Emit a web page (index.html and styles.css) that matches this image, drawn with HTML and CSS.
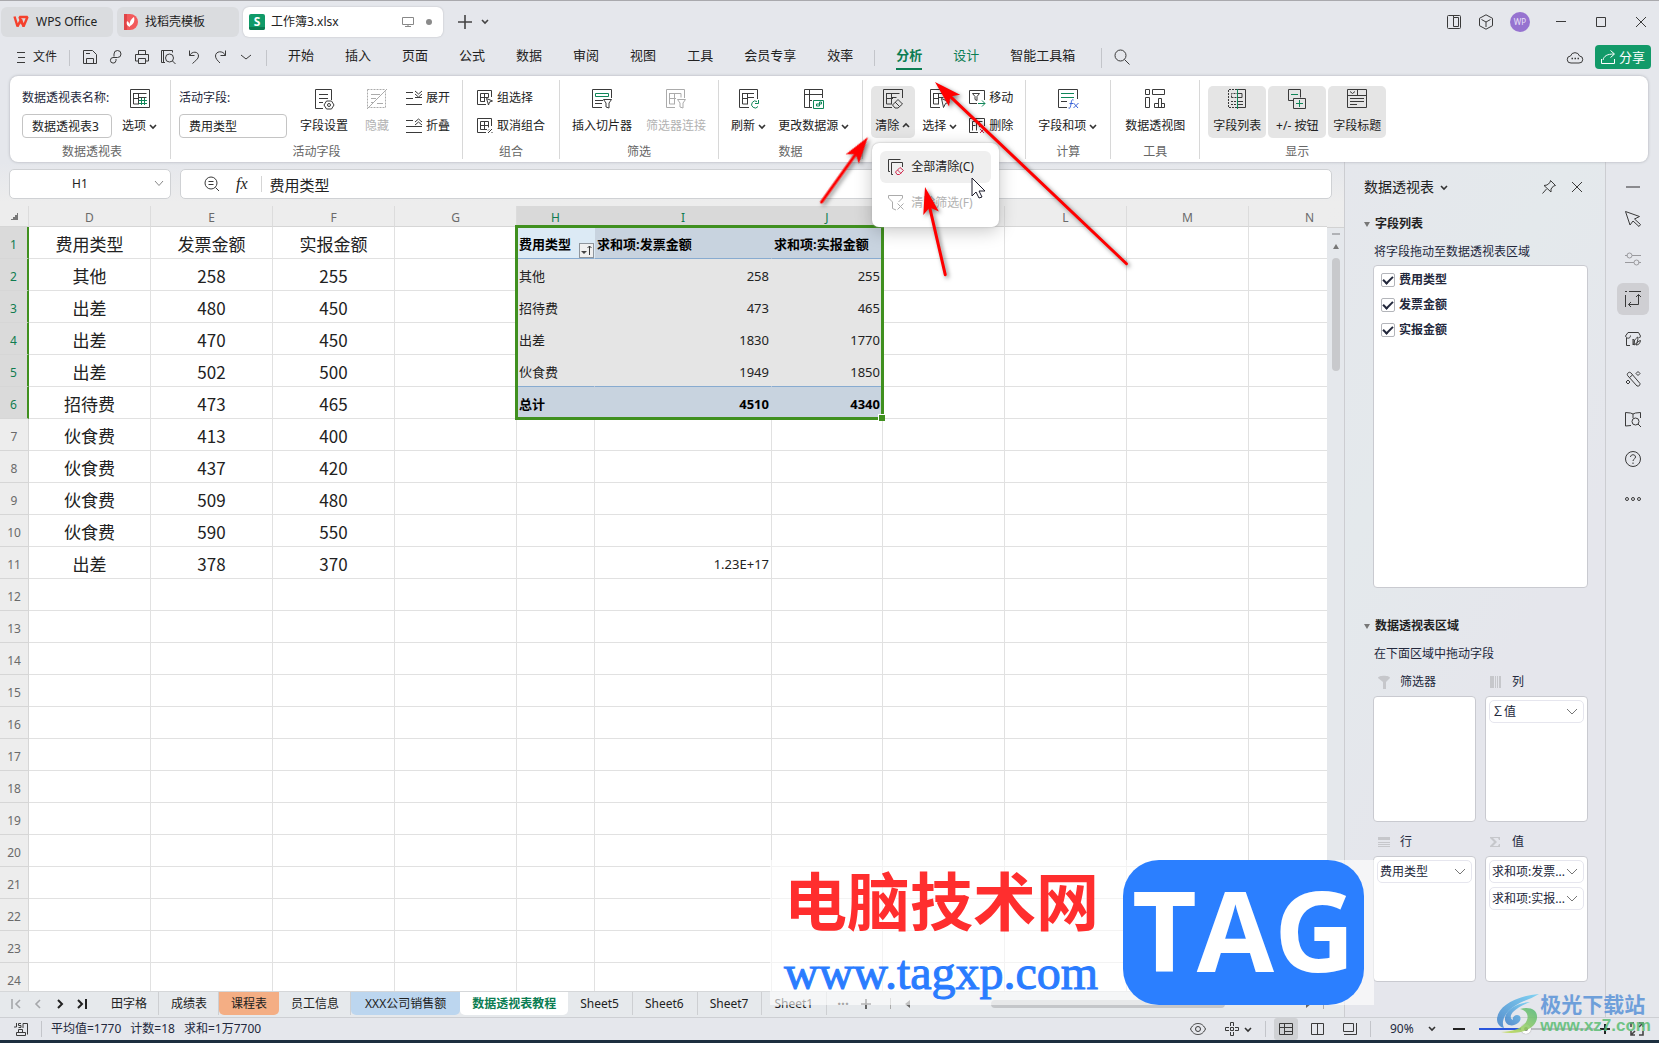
FILE: index.html
```html
<!DOCTYPE html>
<html lang="zh-CN">
<head>
    <meta charset="UTF-8">
    <meta name="viewport" content="width=device-width, initial-scale=1.0">
    <title>工作簿3.xlsx</title>
    <link rel="stylesheet" href="styles.css">
</head>
<body>

    <header class="titlebar">
        <button type="button" class="doc-tab">
            <svg class="tab-logo" viewBox="0 0 16 16"><path d="M1.500 2.500L4.500 12.500L8 5.500L10.500 12.500L14.500 3H6.500L9 10" fill="none" stroke="#f5402c" stroke-width="2.400" stroke-linejoin="bevel"/></svg>
            WPS Office
        </button>
        <button type="button" class="doc-tab tab-template">
            <svg class="tab-logo" viewBox="0 0 16 16"><path d="M1 0h6a8 8 0 0 1 0 16H1z" fill="#f25a5c"/><path d="M1 0h3v16H1z" fill="#e04548"/><path d="M7 13c-3-1-4-3-3-6 2 1 3 3 3 6zM7 12C6 8 8 5 11 3c1 4 0 7-4 9z" fill="#fff"/></svg>
            找稻壳模板
        </button>
        <button type="button" class="doc-tab tab-current">
            <svg class="tab-logo" viewBox="0 0 16 16"><rect width="16" height="16" rx="2" fill="#109a68"/><path d="M0 13h16v1a2 2 0 0 1-2 2H2a2 2 0 0 1-2-2z" fill="#0a7a50"/><text x="8" y="12" text-anchor="middle" font-size="12" font-weight="700" fill="#fff">S</text></svg>
            <span>工作簿3.xlsx</span>
            <svg class="icon muted" width="12" height="12" viewBox="0 0 12 12"><path d="M.5 1.500h11v7H.5zM3 10.500h6M6 9v1"/></svg>
            <i class="dot"></i>
        </button>
        <button type="button" class="new-tab" aria-label="新建"><svg class="icon bold" width="14" height="14" viewBox="0 0 14 14"><path d="M7 0v14M0 7h14"/></svg></button>
        <svg class="icon bold" width="8" height="8" viewBox="0 0 8 8"><path d="M1 2l3 3 3-3"/></svg>

        <div class="window-tools">
            <button type="button" aria-label="布局"><svg class="icon" width="16" height="16" viewBox="0 0 16 16"><rect x="1.500" y="1.500" width="13" height="13" rx="1"/><path d="M7.500 3.500h5v9h-5zM9.500 12.500h2M7.500 1.500v2"/></svg></button>
            <button type="button" aria-label="应用"><svg class="icon" width="16" height="16" viewBox="0 0 16 16"><path d="M8 .8l6.500 3.500v7.400L8 15.200l-6.500-3.500V4.300zM3.500 5.500L8 8l4.500-2.500M8 8v5"/></svg></button>
            <span class="avatar">WP</span>
        </div>
        <div class="window-buttons">
            <button type="button" aria-label="最小化"><svg class="icon" width="12" height="12" viewBox="0 0 12 12"><path d="M1 5.500h10"/></svg></button>
            <button type="button" aria-label="最大化"><svg class="icon" width="12" height="12" viewBox="0 0 12 12"><path d="M1.500 1.500h9v9h-9z"/></svg></button>
            <button type="button" aria-label="关闭"><svg class="icon" width="12" height="12" viewBox="0 0 12 12"><path d="M1 1l10 10M11 1L1 11"/></svg></button>
        </div>
    </header>

    <div class="menubar">
        <button type="button" class="file-btn">
            <svg class="icon" width="8" height="12" viewBox="0 0 8 12"><path d="M0 1.500h8M1 6.500h7M0 11.500h8"/></svg>
            文件
        </button>
        <i class="sep"></i>
        <div class="quick">
            <button type="button" aria-label="保存"><svg class="icon" viewBox="0 0 16 16"><path d="M1.500 1.500h9l4 4v9h-13zM4.500 14.500v-5h7v5M4 4.500h4"/></svg></button>
            <button type="button" aria-label="输出"><svg class="icon" viewBox="0 0 16 16"><path d="M6 7.500V5a3.500 3.500 0 1 1 3.500 3.500H5A2.800 2.800 0 1 0 8 11.500V10"/></svg></button>
            <button type="button" aria-label="打印"><svg class="icon" viewBox="0 0 16 16"><path d="M4.500 5V1.500h7V5M4.500 12h-3V5.500h13V12h-3M4.500 9.500h7v5h-7z"/></svg></button>
            <button type="button" aria-label="预览"><svg class="icon" viewBox="0 0 16 16"><path d="M12.500 3.500V1.500h-11v12H5M3.500 1.500v12"/><circle cx="9.500" cy="9" r="4"/><path d="M12.500 12l3 3"/></svg></button>
            <button type="button" aria-label="撤销"><svg class="icon" viewBox="0 0 16 16"><path d="M3.500 1.500v5h5M3.500 6.500C6 2 12.500 2 12.500 7c0 3-3 4.500-6 7.500"/></svg></button>
            <button type="button" aria-label="恢复"><svg class="icon" viewBox="0 0 16 16"><path d="M13.500 1.500v5h-5M13.500 6.500C11 1 3.500 2 3.500 7c0 2.500 2 4.500 4.500 7"/></svg></button>
            <button type="button" aria-label="更多"><svg class="icon" viewBox="0 0 16 16"><path d="M3 6l5 4 5-4"/></svg></button>
        </div>
        <i class="sep"></i>
        <nav class="menu-tabs">
            <a href="#">开始</a>
            <a href="#">插入</a>
            <a href="#">页面</a>
            <a href="#">公式</a>
            <a href="#">数据</a>
            <a href="#">审阅</a>
            <a href="#">视图</a>
            <a href="#">工具</a>
            <a href="#">会员专享</a>
            <a href="#">效率</a>
        </nav>
        <i class="sep"></i>
        <nav class="menu-tabs">
            <a href="#" class="active">分析</a>
            <a href="#" class="context">设计</a>
            <a href="#">智能工具箱</a>
        </nav>
        <i class="sep tall"></i>
        <button type="button" class="search-btn" aria-label="搜索"><svg class="icon" width="16" height="16" viewBox="0 0 16 16"><circle cx="6.500" cy="6.500" r="5.500"/><path d="M10.500 10.500l5 5"/></svg></button>
        <div class="share-area">
            <svg class="icon" width="16" height="14" viewBox="0 0 16 14"><path d="M4 13a3.500 3.500 0 0 1-.5-7 4.700 4.700 0 0 1 9 0 3.500 3.500 0 0 1-.5 7z"/><path d="M4.500 8.500h1.500M7.500 8.500h1.500M10.500 8.500h1.500" stroke-width="1.500"/></svg>
            <button type="button" class="share">
                <svg class="icon" width="14" height="14" viewBox="0 0 14 14"><path d="M.5 9v4.500h13V9M9.500.5l4 3.500-4 3.500M13 4C6 4 3 6 2 10"/></svg>
                分享
            </button>
        </div>
    </div>

    <section class="ribbon">
        <div class="group">
            <div class="group-items roomy">
                <div class="field">
                    <label for="pivotName">数据透视表名称:</label>
                    <input id="pivotName" type="text" class="name-input" value="数据透视表3">
                </div>
                <button type="button" class="tool">
                    <svg class="icon" viewBox="0 0 20 20"><path d="M.5.5h19v18H.5zM4 4.500h12.500M3.500 4v11H8M3.500 9.500H8M8.500 4.500v11M8.500 8.500h8"/><path class="g" d="M11.500 9v7M14.500 9v7M9 11.500h8M9 14.500h8"/></svg>
                    <span>选项<svg class="chev" viewBox="0 0 10 8"><path d="M2 3l3 3 3-3"/></svg></span>
                </button>
            </div>
            <div class="group-label">数据透视表</div>
        </div>
        <div class="group">
            <div class="group-items loose">
                <div class="field">
                    <label for="activeField">活动字段:</label>
                    <input id="activeField" type="text" class="field-input" value="费用类型">
                </div>
                <button type="button" class="tool">
                    <svg class="icon" viewBox="0 0 20 20"><path d="M9 19.500H1.500V.5h16V11M5 5.500h9M5 9.500h9M5 13.500h4M12.500 12h5l2.500 4-2.500 4h-5L10 16z"/><circle cx="15" cy="16" r="1.500"/></svg>
                    <span>字段设置</span>
                </button>
                <button type="button" class="tool" disabled>
                    <svg class="icon" viewBox="0 0 20 20"><path d="M.5.5h18M.5.5v18M.5 18.500h18v-16" stroke-dasharray="2 1"/><path d="M4 5.500h9M4 9.500h5M4 13.500h3M10 14.500h6M0 20L20 0"/></svg>
                    <span>隐藏</span>
                </button>
                <div class="stack">
                    <button type="button"><svg class="icon" viewBox="0 0 16 16"><path d="M0 2.500h7M0 8.500h7M0 14.500h16M9 7.500h7M9 1l3.500 3L16 1M9 4l3.500 3L16 4"/></svg>展开</button>
                    <button type="button"><svg class="icon" viewBox="0 0 16 16"><path d="M0 2.500h7M0 8.500h16M0 14.500h16M9 4l3.500-3L16 4M9 7l3.500-3L16 7"/></svg>折叠</button>
                </div>
            </div>
            <div class="group-label">活动字段</div>
        </div>
        <div class="group padded">
            <div class="group-items">
                <div class="stack">
                    <button type="button"><svg class="icon" viewBox="0 0 16 16"><path d="M9 14.500H.5V.5h14V7M3.500 3.500h8v4M3.500 3.500v8H8M7.500 3.500v8M3.500 7.500h8M9.500 8.500l6 2.500-3 1-1 3z"/></svg>组选择</button>
                    <button type="button"><svg class="icon" viewBox="0 0 16 16"><path d="M9 14.500H.5V.5h14V8M3.500 3.500h8v6M3.500 3.500v8H10M7.500 3.500v8M3.500 7.500h8M11 15l4-4M12 11.500l-1 1M15 14v1"/></svg>取消组合</button>
                </div>
            </div>
            <div class="group-label">组合</div>
        </div>
        <div class="group">
            <div class="group-items roomy">
                <button type="button" class="tool">
                    <svg class="icon" viewBox="0 0 20 20"><path d="M10 18.500H.5V.5h19V9M3 11.500h8M3 14.500h7M11.500 10.500h8L17 14v5l-3-1v-4z"/><path class="g" d="M3.500 4.500h13v3h-13z"/></svg>
                    <span>插入切片器</span>
                </button>
                <button type="button" class="tool" disabled>
                    <svg class="icon" viewBox="0 0 20 20"><path d="M9 18.500H.5V.5h18V9M4 4.500h11v4M3.500 4v11H8M3.500 9.500H10M8.500 4.500v11M11.500 10.500h8L17 14v5l-3-1v-4z"/></svg>
                    <span>筛选器连接</span>
                </button>
            </div>
            <div class="group-label">筛选</div>
        </div>
        <div class="group">
            <div class="group-items">
                <button type="button" class="tool">
                    <svg class="icon" viewBox="0 0 20 20"><path d="M10 18.500H.5V.5h18V10M4 4.500h11M3.500 4v11H8M3.500 9.500H8M8.500 4.500v11M8.500 8.500H15"/><path class="g" d="M18 12.500a3.500 3.500 0 1 0 1 5M19.500 11v3.500H16"/></svg>
                    <span>刷新<svg class="chev" viewBox="0 0 10 8"><path d="M2 3l3 3 3-3"/></svg></span>
                </button>
                <button type="button" class="tool">
                    <svg class="icon" viewBox="0 0 20 20"><path d="M8 18.500H.5V.5h18V9M5.500.5v18M.5 5.500h18M5.500 11.500H8"/><path class="g" d="M9.500 11.500h10v8h-10zM12.500 17v-2h3v-2h2v2h-2v2z"/></svg>
                    <span>更改数据源<svg class="chev" viewBox="0 0 10 8"><path d="M2 3l3 3 3-3"/></svg></span>
                </button>
            </div>
            <div class="group-label">数据</div>
        </div>
        <div class="group">
            <div class="group-items">
                <div class="menu-anchor">
                    <button type="button" class="tool on" aria-expanded="true">
                        <svg class="icon" viewBox="0 0 20 20"><path d="M9 18.500H.5V.5h19V9M4 4.500h12.500M3.500 4v11H8M3.500 9.500H10M8.500 4.500v11M8.500 8.500h5M15 10.500l4.500 4.500-4.500 4h-3l-2.500-3zM12 13l4.500 4.500"/></svg>
                        <span>清除<svg class="chev" viewBox="0 0 10 8"><path d="M2 5l3-3 3 3"/></svg></span>
                    </button>
                    <div class="drop-menu">
                        <button type="button" class="hover"><svg class="icon" viewBox="0 0 16 16"><path d="M2 12.500H.5V.5h12M5 15.500H3.500V3.500h11V8"/><path class="r" d="M12 8.500l3.500 3-4 4H9L7.500 13zM9.500 11l3.500 3.500"/></svg>全部清除(C)</button>
                        <button type="button" disabled><svg class="icon" viewBox="0 0 16 16"><path d="M8 15l-3.500-1.500V7L.5 3V.5h14V3l-4 4M9.500 8.500l6 6M15.500 8.500l-6 6"/></svg>清除筛选(F)</button>
                    </div>
                </div>
                <button type="button" class="tool">
                    <svg class="icon" viewBox="0 0 20 20"><path d="M10 18.500H.5V.5h18V9M4 4.500h11M3.500 4v11H8M3.500 9.500H8M8.500 4.500v11M8.500 8.500h5M11.500 9.500l8 3.500-4 1.500-2 4z"/></svg>
                    <span>选择<svg class="chev" viewBox="0 0 10 8"><path d="M2 3l3 3 3-3"/></svg></span>
                </button>
                <div class="stack">
                    <button type="button"><svg class="icon" viewBox="0 0 16 16"><path d="M8 13.500H.5V.5h15V10M3.500 3.500h7L8 6.500v4l-2-1v-3z"/><path class="g" d="M9 13.500h7M13 10.500l3 3-3 3"/></svg>移动</button>
                    <button type="button"><svg class="icon" viewBox="0 0 16 16"><path d="M9 14.500H.5V.5h15V8M3.500 3.500h10M3.500 3.500v9M3.500 7.500h3M7.500 3.500v9M10.500 3.500V9"/><path class="r" d="M11 11l4 4M15 11l-4 4"/></svg>删除</button>
                </div>
            </div>
        </div>
        <div class="group">
            <div class="group-items">
                <button type="button" class="tool">
                    <svg class="icon" viewBox="0 0 20 20"><path d="M9 18.500H.5V.5h19V10M3 12.500h6"/><path class="g" d="M3 4.500h13M3 8.500h13"/><path class="b" d="M15.500 11c-2-1-2 1-2.500 4s-1 5-2.500 4M11.500 14.500h3.500M15.500 14l4.500 5M20.500 14l-5 5"/></svg>
                    <span>字段和项<svg class="chev" viewBox="0 0 10 8"><path d="M2 3l3 3 3-3"/></svg></span>
                </button>
            </div>
            <div class="group-label">计算</div>
        </div>
        <div class="group padded">
            <div class="group-items">
                <button type="button" class="tool">
                    <svg class="icon" viewBox="0 0 20 20"><path d="M.5.5h4v5h-4zM7.500.5h12v5h-12zM.5 8.500h4v10h-4zM9.500 18.500v-4h4v-5h3v5h3v4zM13.500 14v4M16.500 14v4"/></svg>
                    <span>数据透视图</span>
                </button>
            </div>
            <div class="group-label">工具</div>
        </div>
        <div class="group last">
            <div class="group-items tight">
                <button type="button" class="tool on">
                    <svg class="icon" viewBox="0 0 20 20"><path d="M10 .5H1.500v18H10M4.500 8.500v-4H10M4.500 8.500H10M4 12.500h6M4 15.500h6" stroke-dasharray="2 1"/><path d="M11 .5h7.500v18H11M11 4.500h4v4h-4M11 12.500h5M11 15.500h5"/><path class="g" d="M10.500 0v20"/></svg>
                    <span>字段列表</span>
                </button>
                <button type="button" class="tool on">
                    <svg class="icon" viewBox="0 0 20 20"><path d="M7 11.500H1.500V.5h12v8M6.500 9.500h12v10h-12z"/><path class="g" d="M4 5.500h7M9 14.500h7M12.500 11v7"/></svg>
                    <span>+/- 按钮</span>
                </button>
                <button type="button" class="tool on">
                    <svg class="icon" viewBox="0 0 20 20"><path d="M.5.5h19v18H.5zM.5 6.500h19M10.500.5v6M3 2.500l2.500 2 2.500-2M3 9.500h14M3 12.500h14M3 15.500h7"/></svg>
                    <span>字段标题</span>
                </button>
            </div>
            <div class="group-label">显示</div>
        </div>
    </section>

    <main class="workspace">
        <div class="editor">
            <div class="formula-bar">
                <div class="name-box">
                    <input type="text" value="H1" aria-label="名称框">
                    <svg class="icon muted" width="10" height="6" viewBox="0 0 10 6"><path d="M1 0l4 4.500L9 0"/></svg>
                </div>
                <div class="formula-box">
                    <svg class="icon" width="16" height="16" viewBox="0 0 16 16"><circle cx="7" cy="7" r="6"/><path d="M11.500 11.500l3.500 3.500M4.500 5.500h5M4.500 8.500h5"/></svg>
                    <em>fx</em>
                    <input type="text" value="费用类型" aria-label="编辑栏">
                </div>
            </div>

            <div class="sheet">
                <div class="grid-wrap">
                    <table class="grid">
                        <colgroup>
                            <col class="c-head"><col class="c-std"><col class="c-std"><col class="c-std"><col class="c-std">
                            <col class="c-h"><col class="c-i"><col class="c-j">
                            <col class="c-std"><col class="c-std"><col class="c-std"><col class="c-std">
                        </colgroup>
                        <thead>
                            <tr>
                                <th class="corner"></th>
                                <th>D</th><th>E</th><th>F</th><th>G</th>
                                <th class="sel">H</th><th class="sel">I</th><th class="sel">J</th>
                                <th>K</th><th>L</th><th>M</th><th>N</th>
                            </tr>
                        </thead>
                        <tbody></tbody>
                    </table>
                    <div class="selection"></div>
                    <button type="button" class="sort-btn" aria-label="排序"><svg class="icon" width="11" height="11" viewBox="0 0 11 11"><path d="M8.500 10V1M6.500 3l2-2 2 2"/><path d="M0 6h6l-3 3z" fill="#444" stroke="none"/></svg></button>
                </div>
                <div class="v-scroll">
                    <i class="split"></i>
                    <i class="arrow-up"></i>
                    <i class="thumb"></i>
                    <i class="arrow-down"></i>
                </div>
            </div>

            <div class="sheet-tabs">
                <div class="sheet-nav">
                    <button type="button" class="dim" aria-label="首个"><svg class="icon bold" width="10" height="10" viewBox="0 0 10 10"><path d="M1 0v10M9 1L5 5l4 4"/></svg></button>
                    <button type="button" class="dim" aria-label="上一个"><svg class="icon bold" width="10" height="10" viewBox="0 0 10 10"><path d="M7 1L3 5l4 4"/></svg></button>
                    <button type="button" aria-label="下一个"><svg class="icon heavy" width="10" height="10" viewBox="0 0 10 10"><path d="M3 1l4 4-4 4"/></svg></button>
                    <button type="button" aria-label="末个"><svg class="icon heavy" width="10" height="10" viewBox="0 0 10 10"><path d="M9 0v10M1 1l4 4-4 4"/></svg></button>
                </div>
                <button type="button" class="sheet-tab">田字格</button>
                <button type="button" class="sheet-tab">成绩表</button>
                <button type="button" class="sheet-tab orange">课程表</button>
                <button type="button" class="sheet-tab">员工信息</button>
                <button type="button" class="sheet-tab blue">XXX公司销售额</button>
                <button type="button" class="sheet-tab current">数据透视表教程</button>
                <button type="button" class="sheet-tab wide">Sheet5</button>
                <button type="button" class="sheet-tab wide">Sheet6</button>
                <button type="button" class="sheet-tab wide">Sheet7</button>
                <button type="button" class="sheet-tab wide">Sheet1</button>
                <button type="button" class="more">···</button>
                <button type="button" class="add" aria-label="新建工作表"><svg class="icon bold" width="10" height="10" viewBox="0 0 10 10"><path d="M5 0v10M0 5h10"/></svg></button>
                <div class="h-scroll">
                    <i class="arrow-left"></i>
                    <i class="thumb"></i>
                    <i class="arrow-right"></i>
                </div>
            </div>
        </div>

        <aside class="pane">
            <div class="pane-head">
                <h2>数据透视表</h2>
                <svg class="chev" viewBox="0 0 10 8"><path d="M2 3l3 3 3-3"/></svg>
                <button type="button" aria-label="固定"><svg class="icon" width="14" height="14" viewBox="0 0 14 14"><path d="M8.500.5l5 5-2 .5-2.500 3v3L2 5.500l3-.5 3-2.500zM4.500 9L.5 13.500"/></svg></button>
                <button type="button" aria-label="关闭"><svg class="icon" width="12" height="12" viewBox="0 0 12 12"><path d="M1 1l10 10M11 1L1 11"/></svg></button>
            </div>
            <h3>字段列表</h3>
            <p>将字段拖动至数据透视表区域</p>
            <div class="field-list">
                <label><input type="checkbox" checked>费用类型</label>
                <label><input type="checkbox" checked>发票金额</label>
                <label><input type="checkbox" checked>实报金额</label>
            </div>
            <h3>数据透视表区域</h3>
            <p>在下面区域中拖动字段</p>
            <div class="areas">
                <div class="area">
                    <div class="area-title"><svg viewBox="0 0 12 14"><path d="M0 3c0-3 12-3 12 0L8 7v7H5V7z"/></svg>筛选器</div>
                    <div class="area-box"></div>
                </div>
                <div class="area">
                    <div class="area-title"><svg viewBox="0 0 12 14"><path d="M0 1h4v12H0zM5 1h1v12H5zM7 1h1v12H7zM9 1h2v12H9z"/></svg>列</div>
                    <div class="area-box">
                        <select aria-label="列"><option>∑值</option></select>
                    </div>
                </div>
                <div class="area">
                    <div class="area-title"><svg viewBox="0 0 12 14"><path d="M0 2h12v3H0zM0 7h12v1H0zM0 9h12v1H0zM0 11h12v1H0z"/></svg>行</div>
                    <div class="area-box">
                        <select aria-label="行"><option>费用类型</option></select>
                    </div>
                </div>
                <div class="area">
                    <div class="area-title"><svg viewBox="0 0 12 14"><path d="M0 2h10v3H9L8 3H3l4 4-4 4h5l1-2h1v3H0v-1l4-4-4-4z"/></svg>值</div>
                    <div class="area-box">
                        <select aria-label="值1"><option>求和项:发票...</option></select>
                        <select aria-label="值2"><option>求和项:实报...</option></select>
                    </div>
                </div>
            </div>
        </aside>

        <div class="rail">
            <button type="button" class="collapse" aria-label="折叠"><i></i></button>
            <button type="button" aria-label="选择"><svg class="icon" viewBox="0 0 16 16"><path d="M.5.5l14 5-5 2.500 6 5.500-1.500 2-6-5.500L5 14z"/></svg></button>
            <button type="button" class="dim" aria-label="属性"><svg class="icon" viewBox="0 0 16 16"><path d="M0 4.500h2.500M7 4.500h9M0 11.500h9M13.500 11.500H16"/><circle cx="4.500" cy="4.500" r="2.500"/><circle cx="11.500" cy="11.500" r="2.500"/></svg></button>
            <button type="button" class="on" aria-label="数据透视表"><svg class="icon" viewBox="0 0 16 16"><path d="M0 .5h2M4 .5h12M.5 4v12M13.500 3.500v10h-10M11 6l2.500-2.500L16 6M6 11l-2.500 2.500L6 16"/></svg></button>
            <button type="button" aria-label="图库"><svg class="icon" viewBox="0 0 16 16"><path d="M5 14.500H1.500V7M14.500 7l1-2-2-3.500H3L.5 5c1 3 5 3 5-.5M8 14V8c2 2 2 5 0 6zM9 14c-1-4 2-7 4-8 0 4-1 7-4 8zM11 14c1-2 2-4 4.500-4.500C15 12 14 14 11 14z"/></svg></button>
            <button type="button" aria-label="工具"><svg class="icon" viewBox="0 0 16 16"><path d="M3 2c1-1 2-1 3 0l9 10.500c0 2-1 3-3 2.500L3 5c-1-1-1-2 0-3zM4.500 6.500l3-2.500"/><path d="M13 .5l2 2-2 2-2-2zM3 9l2 2-2 2-2-2z"/></svg></button>
            <button type="button" aria-label="词典"><svg class="icon" viewBox="0 0 16 16"><path d="M6 14.500L.5 15V1.500l5 .5L8 3l2.500-1 5-.5V7M8 3v4"/><circle cx="10.500" cy="10.500" r="3.500"/><path d="M13 13l3 3"/></svg></button>
            <button type="button" aria-label="帮助"><svg class="icon" viewBox="0 0 16 16"><circle cx="8" cy="8" r="7.500"/><path d="M5.500 6c0-3 5-3 5 0 0 2-2.500 2-2.500 4M8 11.500V13"/></svg></button>
            <button type="button" aria-label="更多"><svg class="icon" viewBox="0 0 16 16"><circle cx="2" cy="8" r="1.500"/><circle cx="8" cy="8" r="1.500"/><circle cx="14" cy="8" r="1.500"/></svg></button>
        </div>
    </main>

    <footer class="statusbar">
        <svg class="icon" width="14" height="14" viewBox="0 0 14 14"><path d="M2.500 1v4H0M7 1.500H4.500v2H7v2H4.500M9 6V1.500h4.500v11M2.500 13.500h9v-3h-9zM4.500 10V7.500h4V10"/></svg>
        <i class="sep"></i>
        <span>平均值=1770</span>
        <span>计数=18</span>
        <span>求和=1万7700</span>
        <div class="status-right">
            <button type="button" aria-label="护眼"><svg class="icon" width="16" height="14" viewBox="0 0 16 14"><path d="M.5 7C3 2 6 1.500 8 1.500S13 2 15.500 7C13 12 10 12.500 8 12.500S3 12 .5 7z"/><circle cx="8" cy="7" r="2.500"/></svg></button>
            <button type="button" class="cross" aria-label="阅读"><svg class="icon" width="14" height="14" viewBox="0 0 14 14"><path d="M5.500 4V.5h3V4M5.500 10v3.500h3V10M4 5.500H.5v3H4M10 5.500h3.500v3H10M5.500 5.500h3v3h-3z"/></svg><svg class="chev" viewBox="0 0 10 8"><path d="M2 3l3 3 3-3"/></svg></button>
            <i class="sep"></i>
            <button type="button" class="view on" aria-label="普通"><svg class="icon" width="14" height="14" viewBox="0 0 14 14"><path d="M.5 1.500h13v11H.5zM.5 5.500h13M5.500 1.500v11M5.500 9.500h8"/></svg></button>
            <button type="button" class="view" aria-label="分页"><svg class="icon" width="14" height="14" viewBox="0 0 14 14"><path d="M.5 1.500h12v11H.5zM6.500 1.500v11"/></svg></button>
            <button type="button" class="view" aria-label="页面"><svg class="icon" width="14" height="14" viewBox="0 0 14 14"><path d="M.5 1.500h10v8H.5zM13.500 1v11.500H1"/></svg></button>
            <i class="sep"></i>
            <select class="zoom-level" aria-label="缩放"><option>90%</option></select>
            <button type="button" aria-label="缩小"><svg class="icon heavy" width="12" height="12" viewBox="0 0 12 12"><path d="M0 6h12"/></svg></button>
            <input type="range" class="zoom-slider" min="0" max="100" value="40" aria-label="缩放比例">
            <button type="button" aria-label="放大"><svg class="icon heavy" width="10" height="10" viewBox="0 0 10 10"><path d="M5 0v10M0 5h10"/></svg></button>
            <button type="button" class="full" aria-label="全屏"><svg class="icon bold" width="14" height="14" viewBox="0 0 14 14"><path d="M9 1h4v4M5 13H1V9M13 1L9 5M1 13l4-4M1 5V1h3M13 9v4H9"/></svg></button>
        </div>
    </footer>
    <div class="taskbar-edge"></div>

    <!-- annotations on top of the window -->
    <svg class="arrows" width="1200" height="300" viewBox="0 0 1200 300">
        <g id="marks">
            <g transform="translate(935 81) rotate(43.500)"><path d="M0 0l27-8-6 8 6 8z"/><path d="M18 0h246"/></g>
            <g transform="translate(868 136) rotate(125.500)"><path d="M0 0l27-8-6 8 6 8z"/><path d="M18 0h62"/></g>
            <g transform="translate(925 186) rotate(77)"><path d="M0 0l27-8-6 8 6 8z"/><path d="M18 0h72"/></g>
        </g>
        <path class="pointer" d="M972 177v18l4-4 3 6 3-1-3-6h6z"/>
    </svg>

    <div class="tag-mark">
        <div class="tag-text">
            <strong>电脑技术网</strong>
            <span>www.tagxp.com</span>
        </div>
        <div class="tag-logo">TAG</div>
    </div>

    <div class="xz-mark">
        <svg width="44" height="42" viewBox="0 0 44 42">
            <defs>
                <linearGradient id="swirlBlue" x1="0" y1="1" x2="1" y2="0"><stop offset="0" stop-color="#3f7fc8"/><stop offset="1" stop-color="#6fd0f5"/></linearGradient>
                <linearGradient id="swirlGreen" x1="0" y1="1" x2="1" y2="0"><stop offset="0" stop-color="#c8dc50"/><stop offset="1" stop-color="#4fb878"/></linearGradient>
            </defs>
            <path d="M43 0C20 2 2 12 1 25c0 5 3 8 7 9-4-8 3-20 20-27 5-2 10-4 15-7z" fill="url(#swirlBlue)"/>
            <path d="M34 8C18 9 8 18 9 26c1 6 8 7 13 3 4-3 3-8-1-8-3 0-5 3-4 5-3-1-3-5 0-8 4-4 10-7 17-10z" fill="url(#swirlBlue)"/>
            <path d="M24 15c10-3 18 1 17 9-1 10-16 18-36 14 12 0 23-4 26-12 2-5-1-10-7-11z" fill="url(#swirlGreen)"/>
        </svg>
        <div class="xz-text">
            <strong>极光下载站</strong>
            <span>www.xz7.com</span>
        </div>
    </div>

    <script src="script.js"></script>
</body>
</html>
```

FILE: script.js
```js
const source = [
    ["费用类型", "发票金额", "实报金额"],
    ["其他", 258, 255],
    ["出差", 480, 450],
    ["出差", 470, 450],
    ["出差", 502, 500],
    ["招待费", 473, 465],
    ["伙食费", 413, 400],
    ["伙食费", 437, 420],
    ["伙食费", 509, 480],
    ["伙食费", 590, 550],
    ["出差", 378, 370],
]

const pivot = [
    ["费用类型", "求和项:发票金额", "求和项:实报金额"],
    ["其他", 258, 255],
    ["招待费", 473, 465],
    ["出差", 1830, 1770],
    ["伙食费", 1949, 1850],
    ["总计", 4510, 4340],
]

const tbody = document.querySelector(".grid tbody")

function addCell(tr, text, className) {
    const td = document.createElement("td")
    td.textContent = text
    if (className) td.className = className
    tr.appendChild(td)
}

for (let i = 0; i < 24; i++) {
    const tr = document.createElement("tr")
    const th = document.createElement("th")
    th.textContent = i + 1
    if (i < pivot.length) th.className = "sel"
    tr.appendChild(th)

    for (let c = 0; c < 3; c++) {
        addCell(tr, source[i] ? source[i][c] : "", "src")
    }
    addCell(tr, "")

    for (let c = 0; c < 3; c++) {
        if (pivot[i]) {
            let name = "pv"
            if (i === 0) name += " pv-head"
            if (i === pivot.length - 1) name += " pv-total"
            if (i === pivot.length - 2) name += " pv-last"
            if (c > 0 && i > 0) name += " num"
            addCell(tr, pivot[i][c], name)
        } else {
            addCell(tr, i === 10 && c === 1 ? "1.23E+17" : "", "num")
        }
    }
    for (let c = 0; c < 4; c++) addCell(tr, "")
    tbody.appendChild(tr)
}
```

FILE: styles.css
```css
* {
    box-sizing: border-box;
}
body {
    margin: 0;
    height: 100vh;
    display: flex;
    flex-direction: column;
    overflow: hidden;
    position: relative;
    background: #e5e7ec;
    border-top: 1px solid #a9a9ad;
    color: #222;
    font: 12px/16px "Noto Sans", "Noto Sans CJK SC", sans-serif;
}
button,
input,
select {
    font: inherit;
    color: inherit;
    border: 0;
    padding: 0;
    margin: 0;
    background: none;
    outline: 0;
}
button {
    display: flex;
    align-items: center;
    justify-content: center;
    white-space: nowrap;
}
a {
    color: inherit;
    text-decoration: none;
}
.icon {
    fill: none;
    stroke: #3a3a3a;
    stroke-width: 1;
    flex: none;
    overflow: visible;
}
.icon .g {
    stroke: #0f8658;
}
.icon .r {
    stroke: #d02c50;
}
.icon .b {
    stroke: #3a63d8;
}
.icon.muted {
    stroke: #888;
}
.icon.bold {
    stroke: #444;
    stroke-width: 1.6;
}
.icon.heavy {
    stroke: #222;
    stroke-width: 2;
}
.chev {
    width: 10px;
    height: 8px;
    margin-left: 2px;
    fill: none;
    stroke: #333;
    stroke-width: 1.6;
    flex: none;
}
.sep {
    width: 1px;
    height: 16px;
    background: #c3c5ca;
    flex: none;
}
.sep.tall {
    height: 20px;
}

/* title bar */
.titlebar {
    height: 38px;
    padding: 6px 0 2px 1px;
    display: flex;
    align-items: center;
    gap: 4px;
    flex: none;
}
.doc-tab {
    width: 112px;
    height: 30px;
    padding-left: 12px;
    gap: 7px;
    justify-content: flex-start;
    border-radius: 6px;
    background: #dadcdf;
}
.tab-logo {
    width: 16px;
    height: 16px;
    flex: none;
}
.tab-template {
    width: 122px;
    padding-left: 6px;
    gap: 6px;
}
.tab-current {
    width: 200px;
    padding: 0 11px 0 6px;
    gap: 6px;
    background: #fff;
    box-shadow: 0 0 2px #b5b7bc;
}
.tab-current span {
    flex: 1;
    text-align: left;
}
.dot {
    width: 6px;
    height: 6px;
    margin-left: 6px;
    border-radius: 50%;
    background: #8a8a8a;
}
.new-tab {
    width: 24px;
    height: 30px;
    margin-left: 6px;
}
.window-tools {
    margin-left: auto;
    display: flex;
    align-items: center;
    gap: 16px;
}
.avatar {
    width: 20px;
    height: 20px;
    border-radius: 50%;
    background: #9673d0;
    color: #e9e0f7;
    font-size: 8px;
    line-height: 20px;
    text-align: center;
}
.window-buttons {
    display: flex;
    padding: 0 12px 0 21px;
    gap: 28px;
}

/* menu row */
.menubar {
    height: 37px;
    padding: 0 8px 0 17px;
    display: flex;
    align-items: center;
    flex: none;
}
.file-btn {
    height: 20px;
    gap: 8px;
    margin: 0 12px 2px 0;
}
.quick {
    display: flex;
    margin: 0 7px 2px;
}
.quick button {
    width: 26px;
    height: 24px;
}
.quick .icon {
    width: 16px;
    height: 16px;
}
.menu-tabs {
    display: flex;
    gap: 31px;
    margin: 0 21px;
    font-size: 13px;
    line-height: 20px;
}
.menu-tabs a {
    padding-bottom: 3px;
    border-bottom: 2px solid transparent;
    white-space: nowrap;
}
.menu-tabs .active {
    color: #0b7d52;
    font-weight: 700;
    border-bottom-color: #0b7d52;
}
.menu-tabs .context {
    color: #0b7d52;
}
.search-btn {
    margin: 0 0 2px 12px;
}
.menu-tabs:nth-of-type(2) {
    margin-right: 26px;
}
.share-area {
    margin: 0 0 2px auto;
    display: flex;
    align-items: center;
    gap: 12px;
}
.share {
    width: 56px;
    height: 24px;
    gap: 4px;
    border-radius: 4px;
    background: #129a69;
    color: #fff;
    font-size: 13px;
}
.share .icon {
    stroke: #fff;
}

/* ribbon */
.ribbon {
    margin: 0 11px 0 10px;
    height: 86px;
    padding: 4px 0 3px 4px;
    display: flex;
    flex: none;
    position: relative;
    z-index: 2;
    background: #fff;
    border-radius: 8px;
    box-shadow: 0 0 3px #a9abb2;
}
.group {
    padding: 6px 8px 0;
    border-right: 1px solid #d8d8d8;
}
.group.padded {
    padding: 6px 10px 0;
}
.group.last {
    border-right: 0;
}
.group-items {
    height: 52px;
    display: flex;
    gap: 3px;
}
.group-items.roomy {
    gap: 6px;
}
.group-items.loose {
    gap: 9px;
}
.group-items.tight {
    gap: 2px;
}
.group-items.tight .tool {
    padding: 3px 5px 0;
    min-width: 58px;
}
.group-label {
    margin-top: 6px;
    line-height: 16px;
    text-align: center;
    color: #666;
}
.field {
    display: flex;
    flex-direction: column;
    align-items: flex-start;
    justify-content: space-between;
    padding-top: 4px;
}
.field label {
    color: #23283c;
    line-height: 16px;
    white-space: nowrap;
}
.name-input,
.field-input {
    width: 90px;
    height: 24px;
    padding: 0 9px;
    border: 1px solid #c4c4c4;
    border-radius: 4px;
}
.field-input {
    width: 108px;
}
.tool {
    height: 52px;
    padding: 3px 4px 0;
    flex-direction: column;
    justify-content: flex-start;
    gap: 9px;
    border-radius: 5px;
}
.tool .icon {
    width: 20px;
    height: 20px;
}
.tool span {
    display: flex;
    align-items: center;
}
.tool.on {
    background: #e5e5e5;
}
.tool:disabled,
.drop-menu button:disabled {
    color: #b2b2b2;
}
.tool:disabled .icon,
.drop-menu button:disabled .icon {
    stroke: #ababab;
}
.stack {
    display: flex;
    flex-direction: column;
    padding: 2px 4px 0;
    gap: 8px;
}
.stack button {
    height: 20px;
    gap: 4px;
    justify-content: flex-start;
}
.stack .icon {
    width: 16px;
    height: 16px;
}
.menu-anchor {
    position: relative;
}
.drop-menu {
    position: absolute;
    left: 1px;
    top: 57px;
    width: 127px;
    padding: 8px 8px 8px;
    background: #fff;
    border-radius: 7px;
    box-shadow: 0 0 2px #aaa, 0 4px 18px rgba(0, 0, 0, .22);
}
.drop-menu button {
    width: 100%;
    height: 32px;
    padding-left: 8px;
    gap: 7px;
    justify-content: flex-start;
    border-radius: 6px;
}
.drop-menu button + button {
    margin-top: 4px;
}
.drop-menu .icon {
    width: 16px;
    height: 16px;
}
.drop-menu .hover {
    background: #efefef;
}

/* workspace */
.workspace {
    flex: 1;
    min-height: 0;
    display: grid;
    grid-template-columns: minmax(0, 1fr) 261px 54px;
}
.editor {
    min-height: 0;
    display: flex;
    flex-direction: column;
    background: linear-gradient(#e5e7ec, #ededed 40px, #e5e9ec);
}
.formula-bar {
    height: 44px;
    padding: 7px 12px 7px 9px;
    display: flex;
    gap: 9px;
    flex: none;
}
.name-box,
.formula-box {
    display: flex;
    align-items: center;
    background: #fff;
    border: 1px solid #cfd1d4;
    border-radius: 5px;
}
.name-box {
    width: 162px;
    padding: 0 6px 0 0;
}
.name-box input {
    width: 100%;
    padding-right: 4px;
    text-align: center;
}
.formula-box {
    flex: 1;
    padding-left: 23px;
}
.formula-box em {
    margin-left: 16px;
    padding-right: 13px;
    border-right: 1px solid #d5d5d5;
    font: italic 16px/16px "Liberation Serif", serif;
}
.formula-box input {
    flex: 1;
    padding-left: 8px;
    font-size: 15px;
    height: 28px;
}
.sheet {
    flex: 1;
    min-height: 0;
    display: flex;
}
.grid-wrap {
    flex: 1;
    min-width: 0;
    position: relative;
    overflow: hidden;
    background: #fff;
}
.grid {
    width: 1371px;
    table-layout: fixed;
    border-collapse: separate;
    border-spacing: 0;
}
.c-head { width: 29px; }
.c-std { width: 122px; }
.c-h { width: 78px; }
.c-i { width: 177px; }
.c-j { width: 111px; }
.grid th,
.grid td {
    height: 32px;
    padding: 2px 2px 0;
    border-right: 1px solid #e1e1e1;
    border-bottom: 1px solid #e1e1e1;
    white-space: nowrap;
    overflow: hidden;
    line-height: 24px;
    text-align: left;
    font-size: 13px;
}
.grid th {
    background: #ededed;
    color: #6a6a6a;
    font-weight: 400;
    font-size: 12px;
    text-align: center;
    border-color: #d6d6d6;
}
.grid thead th {
    height: 21px;
    padding-top: 4px;
    line-height: 16px;
    border-right-color: #dcdcdc;
}
.grid thead th.sel {
    background: #d9d9d9;
    border-right-color: #d9d9d9;
    color: #107c50;
}
.grid tbody th {
    padding-top: 4px;
}
.grid tbody th.sel {
    background: #dadada;
    color: #107c50;
    border-right: 2px solid #40901f;
}
.grid .corner {
    background: linear-gradient(135deg, transparent 50%, #777 50%) 11px 7px / 7px 7px no-repeat #ededed;
}
.grid td.src {
    font-size: 17px;
    text-align: center;
    font-family: "Noto Sans CJK SC", sans-serif;
}
.grid td.num {
    text-align: right;
}
.grid td.pv {
    background: #e5e5e5;
    border-color: #e5e5e5;
    color: #222;
}
.grid td.pv-head,
.grid td.pv-total {
    background: #c8d3df;
    border-color: #c8d3df;
    font-weight: 700;
    color: #000;
}
.grid td.pv-head,
.grid td.pv-last {
    border-bottom-color: #88abd0;
}
.grid td.pv-head:nth-child(6) {
    background: #dceaf5;
    border-right-color: #dceaf5;
}
.selection {
    position: absolute;
    left: 515px;
    top: 19px;
    width: 369px;
    height: 195px;
    border: 3px solid #40901f;
}
.selection::after {
    content: "";
    position: absolute;
    right: -4px;
    bottom: -4px;
    width: 6px;
    height: 6px;
    background: #40901f;
    border: 1px solid #fff;
    border-width: 1px 0 0 1px;
}
.sort-btn {
    position: absolute;
    left: 579px;
    top: 37px;
    width: 15px;
    height: 15px;
    background: #f0f0f0;
    border: 1px solid #8f959c;
}
.v-scroll {
    width: 17px;
    margin-top: 21px;
    padding: 5px 0 8px;
    display: flex;
    flex-direction: column;
    align-items: center;
    background: #e5e8ec;
    border-top: 1px solid #d2d2d2;
}
.split {
    width: 8px;
    height: 2px;
    background: #b0b2b6;
}
.arrow-up,
.arrow-down {
    margin-top: 9px;
    border: 3px solid transparent;
    border-top: 0;
    border-bottom: 5px solid #777;
}
.arrow-down {
    margin-top: auto;
    border-bottom: 0;
    border-top: 5px solid #777;
}
.v-scroll .thumb {
    width: 8px;
    height: 113px;
    margin-top: 9px;
    border-radius: 4px;
    background: #c8c9cc;
}

/* sheet tabs */
.sheet-tabs {
    height: 26px;
    padding: 0 20px 2px 5px;
    display: flex;
    flex: none;
    border-top: 1px solid #d5d7d9;
    background: #e6e9ec;
}
.sheet-nav {
    width: 94px;
    display: flex;
}
.sheet-nav button {
    width: 22px;
}
.sheet-nav .dim .icon {
    stroke: #a5a7aa;
}
.sheet-tab {
    height: 23px;
    padding: 0 11px 0 12px;
    border-right: 1px solid #cdcfd2;
    flex: none;
}
.sheet-tab.wide {
    padding: 0 13px 0 12px;
}
.sheet-tab.orange,
.sheet-tab.blue,
.sheet-tab.current {
    padding: 0 12px;
    border-right: 0;
    border-radius: 0 0 5px 5px;
    background: #f4ae84;
}
.sheet-tab.blue {
    padding: 0 14px;
    background: #bcd6ef;
}
.sheet-tab.current {
    background: #fff;
    color: #0b7d52;
    font-weight: 700;
}
.more {
    padding-left: 10px;
    font-size: 14px;
    font-weight: 700;
}
.add {
    margin: 0 19px 0 12px;
}
.h-scroll {
    flex: 1;
    margin: 6px 0;
    padding: 0 12px 0 14px;
    display: flex;
    align-items: center;
    justify-content: space-between;
    border: 1px solid #aaa;
    border-width: 0 1px;
}
.arrow-left,
.arrow-right {
    border: 4px solid transparent;
    border-left: 0;
    border-right: 5px solid #666;
}
.arrow-right {
    border-right: 0;
    border-left: 5px solid #666;
}
.h-scroll .thumb {
    width: 234px;
    height: 8px;
    border-radius: 4px;
    background: #c4c6c9;
}

/* pivot pane */
.pane {
    padding: 11px 17px 0 19px;
    border-left: 1px solid #cccdd1;
    background: linear-gradient(120deg, #e5e7ec, #e4e9ec 30%, #e5e6ec 60%);
}
.pane-head {
    height: 28px;
    display: flex;
    align-items: center;
}
.pane-head h2 {
    margin: 0;
    font-size: 14px;
    font-weight: 400;
    line-height: 20px;
}
.pane-head .chev {
    margin-left: 5px;
}
.pane-head button {
    width: 28px;
    height: 24px;
}
.pane-head button:nth-of-type(1) {
    margin-left: auto;
}
.pane-head button:last-child {
    margin-right: -3px;
}
.pane h3 {
    margin: 13px 0 0;
    display: flex;
    align-items: center;
    gap: 5px;
    font-size: 12px;
    line-height: 20px;
}
.pane h3::before {
    content: "";
    border: 3px solid transparent;
    border-bottom: 0;
    border-top: 5px solid #777;
}
.pane p {
    margin: 9px 0 4px 10px;
    line-height: 18px;
    color: #23283c;
}
.field-list {
    height: 323px;
    margin: 0 0 28px 9px;
    padding: 1px 7px;
    background: #fff;
    border: 1px solid #c9cad0;
    border-radius: 4px;
}
.field-list label {
    height: 25px;
    display: flex;
    align-items: center;
    gap: 4px;
    font-weight: 700;
    color: #23283c;
}
.field-list input {
    appearance: none;
    width: 14px;
    height: 14px;
    border: 1px solid #b3b5ba;
    border-radius: 2px;
    display: grid;
    place-items: center;
}
.field-list input:checked::after {
    content: "";
    width: 8px;
    height: 4px;
    margin-top: -2px;
    border: 2px solid #23283c;
    border-width: 0 0 2px 2px;
    transform: rotate(-45deg);
}
.areas {
    margin: 4px 0 0 9px;
    display: grid;
    grid-template-columns: 1fr 1fr;
    gap: 5px 9px;
}
.area-title {
    height: 29px;
    padding-left: 5px;
    display: flex;
    align-items: center;
    gap: 10px;
    color: #23283c;
}
.area-title svg {
    width: 12px;
    height: 14px;
    fill: #c6c7cb;
}
.area-box {
    height: 126px;
    padding: 3px;
    display: flex;
    flex-direction: column;
    gap: 4px;
    background: #fff;
    border: 1px solid #c9cad0;
    border-radius: 4px;
}
.area-box select {
    appearance: none;
    width: 100%;
    height: 23px;
    padding-left: 2px;
    border: 1px solid #e6e6ee;
    border-radius: 5px;
    color: #23283c;
    background: url("data:image/svg+xml,%3Csvg xmlns='http://www.w3.org/2000/svg' width='12' height='8'%3E%3Cpath d='M1 1l5 5 5-5' fill='none' stroke='%23777'/%3E%3C/svg%3E") right 5px center no-repeat;
}

/* right rail */
.rail {
    padding: 9px 0;
    display: flex;
    flex-direction: column;
    align-items: center;
    gap: 8px;
    border-left: 1px solid #cccdd1;
}
.rail button {
    width: 32px;
    height: 32px;
    border-radius: 6px;
    flex: none;
}
.rail .icon {
    width: 16px;
    height: 16px;
}
.rail .collapse i {
    width: 14px;
    height: 2px;
    background: #8a8a8e;
}
.rail .collapse {
    margin: 0 0 -8px;
}
.rail .dim .icon {
    stroke: #9a9a9e;
}
.rail .on {
    background: #cfcfd3;
}

/* status bar */
.statusbar {
    height: 23px;
    padding: 0 15px 0 14px;
    display: flex;
    align-items: center;
    gap: 9px;
    flex: none;
    border-top: 1px solid #cdcfd3;
    color: #23283c;
    white-space: nowrap;
}
.statusbar > .icon {
    margin-right: 4px;
}
.status-right {
    margin-left: auto;
    display: flex;
    align-items: center;
}
.cross {
    margin: 0 12px 0 19px;
}
.cross .chev {
    margin-left: 4px;
}
.view {
    width: 24px;
    height: 22px;
    margin-left: 8px;
    border-radius: 3px;
}
.view.on {
    background: #cfd1d4;
}
.view + .sep {
    margin-left: 8px;
}
.zoom-level {
    appearance: none;
    width: 46px;
    margin: 0 17px 0 19px;
    background: url("data:image/svg+xml,%3Csvg xmlns='http://www.w3.org/2000/svg' width='8' height='6'%3E%3Cpath d='M1 1l3 3 3-3' fill='none' stroke='%23333' stroke-width='1.6'/%3E%3C/svg%3E") right center no-repeat;
}
.zoom-slider {
    appearance: none;
    width: 116px;
    height: 2px;
    margin: 0 5px 0 14px;
    background: linear-gradient(90deg, #2a56dd 40%, #b9bbc0 40%);
}
.zoom-slider::-webkit-slider-thumb {
    appearance: none;
    width: 10px;
    height: 10px;
    border-radius: 50%;
    background: #777;
    border: 3px solid #fff;
    box-shadow: 0 0 1px #777;
}
.full {
    margin-left: 20px;
}
.taskbar-edge {
    height: 3px;
    flex: none;
    background: #1d2f3f;
}

/* overlays */
.arrows {
    position: absolute;
    left: 0;
    top: 0;
    z-index: 5;
    pointer-events: none;
}
#marks {
    fill: #f00;
    stroke: #f00;
    stroke-width: 3;
    stroke-linecap: round;
    filter: drop-shadow(2px 2px 2px rgba(0, 0, 0, .5));
}
#marks path:first-child {
    stroke: none;
}
.pointer {
    fill: #fff;
    stroke: #1c1c2c;
}
.tag-mark {
    position: absolute;
    right: 285px;
    bottom: 38px;
    z-index: 5;
    width: 604px;
    height: 145px;
    padding-right: 10px;
    display: flex;
    justify-content: space-between;
    background: rgba(255, 255, 255, .6);
}
.tag-text {
    padding-left: 14px;
    display: flex;
    flex-direction: column;
}
.tag-text strong {
    font-size: 63px;
    line-height: 82px;
    font-weight: 700;
    color: #ff2e2e;
}
.tag-text span {
    font: 48px/62px "Liberation Serif", serif;
    color: #2a7cff;
    -webkit-text-stroke: 1px #2a7cff;
}
.tag-logo {
    width: 241px;
    border-radius: 36px;
    background: #2b7fff;
    color: #fff;
    font: 700 112px/138px "Open Sans", sans-serif;
    text-align: center;
}
.xz-mark {
    position: absolute;
    right: 8px;
    bottom: 6px;
    z-index: 5;
    display: flex;
    align-items: center;
    opacity: .85;
}
.xz-text {
    display: flex;
    flex-direction: column;
}
.xz-text strong {
    font-size: 21px;
    line-height: 22px;
    color: #5a93d8;
}
.xz-text span {
    font: 700 17px/22px "Liberation Sans", sans-serif;
    color: #5cbd74;
}
```
